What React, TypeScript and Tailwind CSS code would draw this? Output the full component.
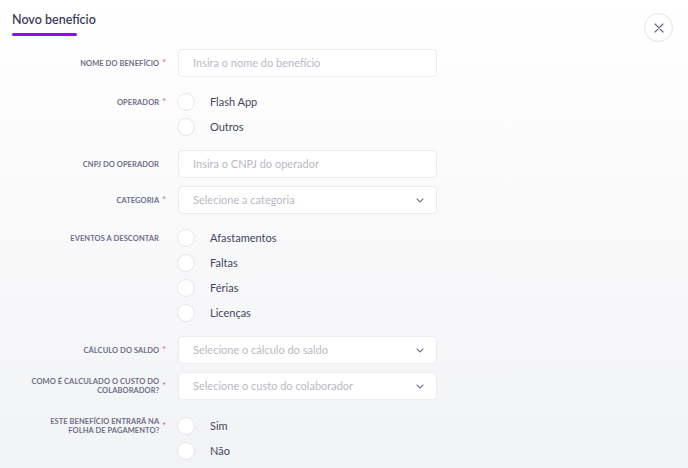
import React from "react";

const Req = () => <span className="ml-[3px] text-[#f0468a] text-[9px] leading-none relative -top-[1px]">*</span>;

function Label({ text, req }: { text: React.ReactNode; req?: boolean }) {
  return (
    <div className="flex items-center justify-end">
      <span className="text-right text-[7.5px] font-bold uppercase leading-[9px] tracking-[0.01em] text-[#6e6e88] max-w-[132px]">{text}</span>
      {req ? <Req /> : <span className="w-[7px]" />}
    </div>
  );
}

function Chevron() {
  return (
    <svg width="8" height="5" viewBox="0 0 8 5" fill="none" className="mr-[12px]">
      <path d="M1 1l3 3 3-3" stroke="#7a7a94" strokeWidth="1.1" strokeLinecap="round" strokeLinejoin="round" />
    </svg>
  );
}

function Input({ ph, select }: { ph: string; select?: boolean }) {
  return (
    <div className="h-[28px] w-[259px] bg-white border border-[#ebebf0] rounded-[4px] flex items-center justify-between pl-[14px]">
      <span className="text-[11px] text-[#b9b9c6]">{ph}</span>
      {select ? <Chevron /> : null}
    </div>
  );
}

function Radios({ items }: { items: string[] }) {
  return (
    <div className="flex flex-col gap-[7px]">
      {items.map((t) => (
        <div key={t} className="flex items-center h-[18px]">
          <span className="w-[18px] h-[18px] rounded-full bg-white border border-[#e6e6ec] -ml-[1px]" />
          <span className="ml-[15px] text-[11px] text-[#45455e]">{t}</span>
        </div>
      ))}
    </div>
  );
}

function Row({ label, children, mt, top }: { label: React.ReactNode; children: React.ReactNode; mt: string; top?: boolean }) {
  return (
    <div className={`flex ${mt}`}>
      <div className={`w-[166px] flex ${top ? "items-start h-[18px]" : "items-center"} justify-end`}>
        <div className={top ? "h-[18px] flex items-center" : ""}>{label}</div>
      </div>
      <div className="ml-[12px]">{children}</div>
    </div>
  );
}

export default function App() {
  return (
    <div
      className="w-[688px] h-[468px] overflow-hidden bg-gradient-to-b from-[#ffffff] to-[#f2f3f5]"
      style={{ fontFamily: "Lato, 'Noto Sans', sans-serif" }}
    >
      <div className="flex justify-between items-start">
        <div className="pl-[12px] pt-[11px]">
          <div className="text-[12.5px] font-semibold text-[#3e3e58] leading-[18px]">Novo benefício</div>
          <div className="mt-[4px] w-[65px] h-[3px] rounded-full bg-[#8c0cf5]" />
        </div>
        <div className="mr-[15px] mt-[13px] w-[29px] h-[29px] rounded-full border border-[#e3e3ea] bg-white flex items-center justify-center">
          <svg width="10" height="10" viewBox="0 0 10 10" fill="none">
            <path d="M1 1l8 8M9 1L1 9" stroke="#6e6e8c" strokeWidth="1.2" strokeLinecap="round" />
          </svg>
        </div>
      </div>
      <div className="flex flex-col mt-[7px]">
        <Row mt="mt-0" label={<Label text="Nome do benefício" req />}>
          <Input ph="Insira o nome do benefício" />
        </Row>
        <Row mt="mt-[16px]" top label={<Label text="Operador" req />}>
          <Radios items={["Flash App", "Outros"]} />
        </Row>
        <Row mt="mt-[14px]" label={<Label text="CNPJ do operador" />}>
          <Input ph="Insira o CNPJ do operador" />
        </Row>
        <Row mt="mt-[8px]" label={<Label text="Categoria" req />}>
          <Input ph="Selecione a categoria" select />
        </Row>
        <Row mt="mt-[15px]" top label={<Label text="Eventos a descontar" />}>
          <Radios items={["Afastamentos", "Faltas", "Férias", "Licenças"]} />
        </Row>
        <Row mt="mt-[14px]" label={<Label text="Cálculo do saldo" req />}>
          <Input ph="Selecione o cálculo do saldo" select />
        </Row>
        <Row mt="mt-[8px]" label={<Label text="Como é calculado o custo do colaborador?" req />}>
          <Input ph="Selecione o custo do colaborador" select />
        </Row>
        <Row mt="mt-[17px]" top label={<Label text="Este benefício entrará na folha de pagamento?" req />}>
          <Radios items={["Sim", "Não"]} />
        </Row>
      </div>
    </div>
  );
}
